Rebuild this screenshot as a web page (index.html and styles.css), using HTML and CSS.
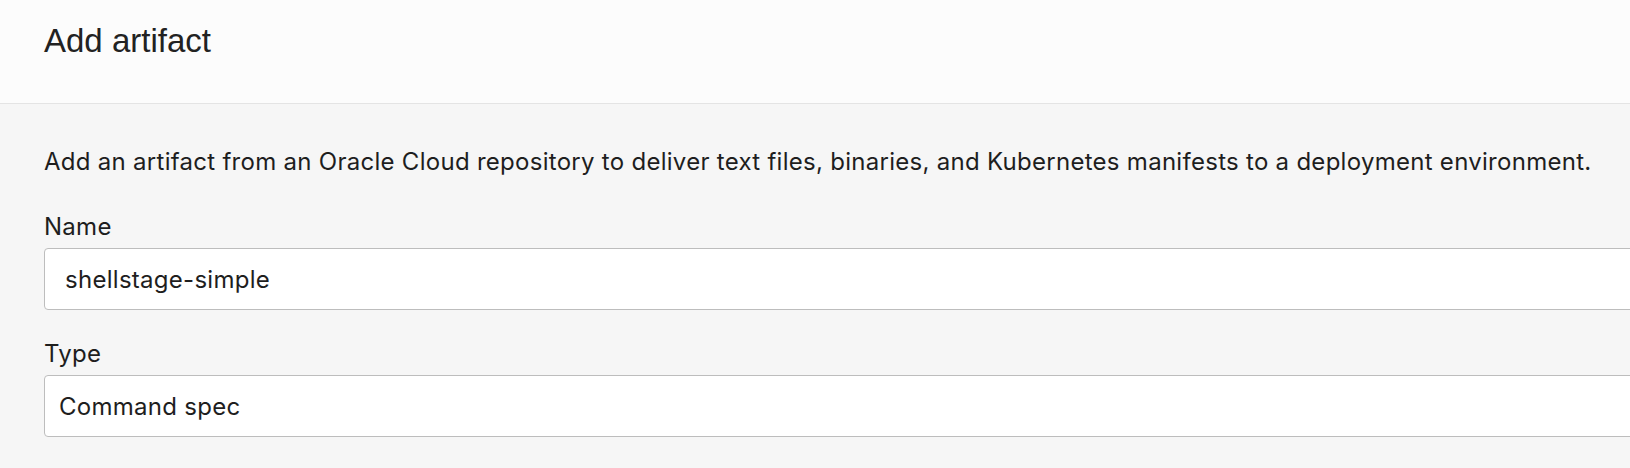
FILE: index.html
```html
<!DOCTYPE html>
<html lang="en">
<head>
<meta charset="utf-8">
<title>Add artifact</title>
<link rel="stylesheet" href="styles.css">
</head>
<body>
<div class="page">
  <header class="panel-header">
    <h1 class="panel-title">Add artifact</h1>
  </header>
  <main class="panel-body">
    <p class="intro">Add an artifact from an Oracle Cloud repository to deliver text files, binaries, and Kubernetes manifests to a deployment environment.</p>
    <div class="field">
      <label class="field-label">Name</label>
      <div class="text-input">shellstage-simple</div>
    </div>
    <div class="field">
      <label class="field-label">Type</label>
      <div class="select-input">Command spec</div>
    </div>
  </main>
</div>
</body>
</html>
```
FILE: styles.css
```css
html, body {
  margin: 0;
  padding: 0;
  background: #f6f6f6;
}
body {
  font-family: Inter, "Noto Sans", sans-serif;
  color: #1e1e1e;
}
.page {
  width: 100%;
  height: 468px;
  overflow: hidden;
}
.panel-header {
  box-sizing: border-box;
  height: 104px;
  background: #fcfcfc;
  border-bottom: 1px solid #e4e4e4;
  padding-left: 44px;
  display: flex;
  align-items: flex-start;
}
.panel-title {
  margin: 0;
  padding-top: 21px;
  font-family: "Liberation Sans", Arial, sans-serif;
  font-weight: 400;
  font-size: 33px;
  line-height: 40px;
  color: #222;
}
.panel-body {
  padding: 40px 0 0 44px;
  display: flex;
  flex-direction: column;
  font-size: 24px;
  letter-spacing: 0.28px;
}
.intro {
  margin: 0 0 29px;
  line-height: 36px;
  white-space: nowrap;
}
.field {
  display: flex;
  flex-direction: column;
  gap: 3px;
  margin-bottom: 26px;
}
.field-label {
  line-height: 36px;
}
.text-input, .select-input {
  box-sizing: border-box;
  width: calc(100% + 20px);
  height: 62px;
  background: #fff;
  border: 1px solid #bdbdbd;
  border-radius: 4px;
  display: flex;
  align-items: center;
}
.text-input {
  padding-left: 20px;
}
.select-input {
  padding-left: 14px;
}
```
